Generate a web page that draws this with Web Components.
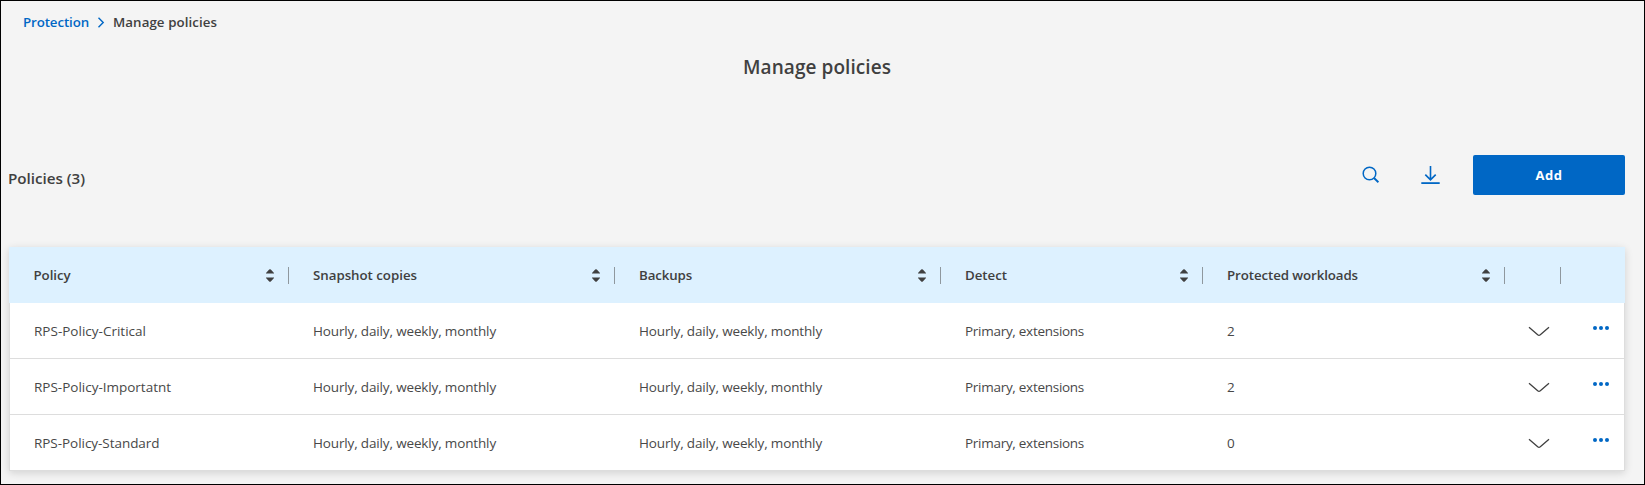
<!DOCTYPE html>
<html lang="en">
<head>
<meta charset="utf-8">
<title>Manage policies</title>
<style>
html,body{margin:0;height:100%}
body{font-family:"Open Sans","Noto Sans",sans-serif;font-size:13.5px;color:#404040;background:#f4f4f4}
</style>
</head>
<body>
<policy-page></policy-page>
<script>
const define=(name,html,setup)=>customElements.define(name,class extends HTMLElement{
  connectedCallback(){
    if(this.shadowRoot)return;
    const root=this.attachShadow({mode:'open'});
    const t=document.createElement('template');
    t.innerHTML=typeof html==='function'?html(this):html;
    root.appendChild(t.content.cloneNode(true));
    if(setup)setup(this);
  }
});

/* Text run tracked so that it fills the width given in its "w" attribute. */
define('tracked-text','<style>:host{display:inline-block;white-space:nowrap}</style><slot></slot>',el=>{
  const w=parseFloat(el.getAttribute('w'));
  if(!w)return;
  const natural=el.getBoundingClientRect().width;
  el.style.letterSpacing=((w-natural)/el.textContent.length).toFixed(3)+'px';
});

define('sort-icon',`<style>:host{display:block;width:8px;height:13px}svg{display:block}</style>
<svg width="8" height="13" viewBox="0 0 8 13"><path d="M0 4.6V4L3.2.5Q4 0 4.8.5L8 4v.6ZM0 8.4V9l3.2 3.5q.8.5 1.6 0L8 9v-.6Z" fill="#404040"/></svg>`);
define('search-icon',`<style>:host{display:block}svg{display:block}</style>
<svg width="18" height="18" viewBox="0 0 18 18" fill="none" stroke="#0067c5"><circle cx="7.5" cy="7.5" r="6.3" stroke-width="1.5"/><path d="M12 12l4.4 4.2" stroke-width="1.9"/></svg>`);
define('download-icon',`<style>:host{display:block}svg{display:block}</style>
<svg width="20" height="20" viewBox="0 0 20 20" fill="none" stroke="#0067c5" stroke-width="1.6"><path d="M10.5 1v13.6M5.3 9.6l5.2 5.3 5.2-5.3"/><path d="M1.3 18.1h18.4" stroke-width="1.8"/></svg>`);
define('expand-icon',`<style>:host{display:block}svg{display:block}</style>
<svg width="22" height="12" viewBox="0 0 22 12" fill="none" stroke="#404040" stroke-width="1.3"><path d="M1 1.3l8.7 7.5q1.3 1 2.6 0L21 1.3"/></svg>`);
define('more-icon',`<style>:host{display:block}svg{display:block}</style>
<svg width="16" height="4" viewBox="0 0 16 4" fill="#0067c5"><circle cx="2" cy="2" r="2"/><circle cx="8" cy="2" r="2"/><circle cx="14" cy="2" r="2"/></svg>`);

define('bread-crumb',`<style>:host{display:flex;align-items:center;height:20px;font-weight:550;font-size:13.3px}a{color:#0067c5}svg{display:block;margin:0 8px 0 9px}</style>
<a><tracked-text w="66">Protection</tracked-text></a>
<svg width="7" height="11" viewBox="0 0 7 11" fill="none" stroke="#0067c5" stroke-width="1.4"><path d="M.5.8l4.7 4.7L.5 10.2"/></svg>
<tracked-text w="104">Manage policies</tracked-text>`);

define('table-toolbar',`<style>
:host{display:flex;align-items:center;height:40px}
.count{flex:1;font-size:15.2px;font-weight:550;padding-top:5px}.count tracked-text{margin-left:-1px}
search-icon{margin-right:40px}download-icon{margin-right:33px}
button{all:unset;box-sizing:border-box;width:152px;height:40px;line-height:18px;padding-bottom:1px;background:#0067c5;color:#fff;border-radius:2px;text-align:center;font-weight:700;font-size:13px;display:flex;align-items:center;justify-content:center}
</style><span class="count"><tracked-text w="77">Policies (3)</tracked-text></span>
<search-icon></search-icon><download-icon></download-icon><button><tracked-text w="27">Add</tracked-text></button>`);

define('header-cell',el=>`<style>
:host{display:flex;align-items:center;box-sizing:border-box;padding-left:24px;font-weight:550;font-size:13.3px;height:56px}
span{flex:1;padding-bottom:1px}sort-icon{margin-right:14px}i{width:1px;height:17px;background:#8f989e}
</style><span><slot></slot></span>${el.hasAttribute('sortable')?'<sort-icon></sort-icon>':''}${el.hasAttribute('last')?'':'<i></i>'}`);

define('policy-row',el=>{
  const v=(el.getAttribute('values')||'').split('|');
  const w=[el.getAttribute('name-width'),183,183,119,8];
  return `<style>
:host{display:grid;grid-template-columns:279px 326px 326px 262px 302px 56px 63px;height:56px;box-sizing:border-box;background:#fff;border:solid #ddd;border-width:0 1px 1px;align-items:center}
.c{padding-left:24px;color:#484848}.c:first-child{padding-left:23.5px}expand-icon{margin:3px 0 0 23px}more-icon{margin:-5px 0 0 32px}
</style>${v.map((t,i)=>`<div class="c"><tracked-text w="${w[i]}">${t}</tracked-text></div>`).join('')}<expand-icon></expand-icon><more-icon></more-icon>`;
});

define('policy-table',`<style>
:host{display:block;box-shadow:0 2px 8px rgba(0,0,0,.14)}
header{display:grid;grid-template-columns:280px 326px 326px 262px 302px 56px 64px;background:#ddf1ff}
header-cell:first-child{padding-left:24.5px}
</style><header>
<header-cell sortable><tracked-text w="37">Policy</tracked-text></header-cell>
<header-cell sortable><tracked-text w="104">Snapshot copies</tracked-text></header-cell>
<header-cell sortable><tracked-text w="53">Backups</tracked-text></header-cell>
<header-cell sortable><tracked-text w="42">Detect</tracked-text></header-cell>
<header-cell sortable><tracked-text w="131">Protected workloads</tracked-text></header-cell>
<header-cell></header-cell><header-cell last></header-cell></header>
<policy-row name-width="112" values="RPS-Policy-Critical|Hourly, daily, weekly, monthly|Hourly, daily, weekly, monthly|Primary, extensions|2"></policy-row>
<policy-row name-width="137" values="RPS-Policy-Importatnt|Hourly, daily, weekly, monthly|Hourly, daily, weekly, monthly|Primary, extensions|2"></policy-row>
<policy-row name-width="125.5" values="RPS-Policy-Standard|Hourly, daily, weekly, monthly|Hourly, daily, weekly, monthly|Primary, extensions|0"></policy-row>`);

define('policy-page',`<style>
:host{display:flex;flex-direction:column;box-sizing:border-box;height:485px;border:1px solid #000;background:#f4f4f4;padding:11px 19px 0 8px;overflow:hidden}
bread-crumb{margin-left:14px}
h1{margin:20px 0 0;padding-left:0;height:30px;line-height:30px;font-size:19px;font-weight:550;text-align:center}
table-toolbar{margin-top:73px}policy-table{margin-top:52px}
</style><bread-crumb></bread-crumb><h1><tracked-text w="148">Manage policies</tracked-text></h1><table-toolbar></table-toolbar><policy-table></policy-table>`);
</script>
</body>
</html>
